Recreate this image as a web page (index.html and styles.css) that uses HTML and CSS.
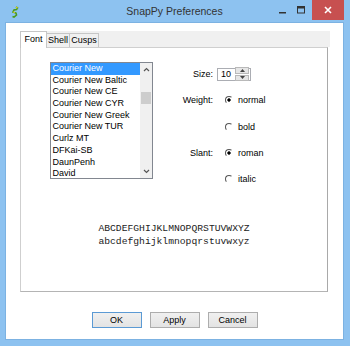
FILE: index.html
```html
<!DOCTYPE html>
<html lang="en">
<head>
  <meta charset="UTF-8">
  <title>SnapPy Preferences</title>
  <link rel="stylesheet" href="styles.css">
</head>
<body>
  <div class="window">
    <div class="titlebar">
      <div class="app-icon">
        <svg width="8" height="12" viewBox="0 0 8 12">
          <path d="M5 1 L6.5 2 L5.5 3.5 L3 4 L2 6 L5 7 L5.5 9 L3 11 L1.5 10.5" fill="none" stroke="#4a9a1c" stroke-width="1.6"/>
          <path d="M5 1 L6.5 2" stroke="#e8d020" stroke-width="1.2"/>
          <path d="M2 6 L4 6.5" stroke="#e8d020" stroke-width="1"/>
        </svg>
      </div>
      <div class="title">SnapPy Preferences</div>
      <div class="controls">
        <span class="ctl">
          <svg width="8" height="8" viewBox="0 0 8 8"><rect x="0" y="6" width="7" height="1.5" fill="#333"/></svg>
        </span>
        <span class="ctl">
          <svg width="9" height="8" viewBox="0 0 9 8"><rect x="0.5" y="0.5" width="7" height="6.5" fill="none" stroke="#333"/><rect x="0.5" y="0.5" width="7" height="2" fill="#333"/></svg>
        </span>
        <span class="ctl close">
          <svg width="8" height="8" viewBox="0 0 8 8"><path d="M1 1 L7 7 M7 1 L1 7" stroke="#fff" stroke-width="1.6"/></svg>
        </span>
      </div>
    </div>

    <div class="client">
      <div class="notebook">
        <div class="tabs">
          <div class="tab active">Font</div>
          <div class="tab shell">Shell</div>
          <div class="tab cusps">Cusps</div>
        </div>

        <div class="panel">
          <div class="top-row">
            <div class="listbox">
              <ul class="items">
                <li class="selected">Courier New</li>
                <li>Courier New Baltic</li>
                <li>Courier New CE</li>
                <li>Courier New CYR</li>
                <li>Courier New Greek</li>
                <li>Courier New TUR</li>
                <li>Curlz MT</li>
                <li>DFKai-SB</li>
                <li>DaunPenh</li>
                <li>David</li>
              </ul>
              <div class="scrollbar">
                <svg class="arrow" width="7" height="5" viewBox="0 0 7 5"><path d="M1 4 L3.5 1.5 L6 4" fill="none" stroke="#555" stroke-width="1.2"/></svg>
                <div class="track"><div class="thumb"></div></div>
                <svg class="arrow" width="7" height="5" viewBox="0 0 7 5"><path d="M1 1 L3.5 3.5 L6 1" fill="none" stroke="#555" stroke-width="1.2"/></svg>
              </div>
            </div>

            <div class="form">
              <label class="lbl">Size:</label>
              <div class="spin">
                <span class="spin-value">10</span>
                <span class="spin-btns">
                  <span class="spin-btn"><svg width="5" height="3" viewBox="0 0 5 3"><path d="M0 3 L2.5 0 L5 3Z" fill="#444"/></svg></span>
                  <span class="spin-btn"><svg width="5" height="3" viewBox="0 0 5 3"><path d="M0 0 L2.5 3 L5 0Z" fill="#444"/></svg></span>
                </span>
              </div>

              <label class="lbl">Weight:</label>
              <div class="radio checked">normal</div>
              <span></span>
              <div class="radio">bold</div>

              <label class="lbl">Slant:</label>
              <div class="radio checked">roman</div>
              <span></span>
              <div class="radio">italic</div>
            </div>
          </div>

          <div class="sample">
            ABCDEFGHIJKLMNOPQRSTUVWXYZ<br>
            abcdefghijklmnopqrstuvwxyz
          </div>
        </div>
      </div>

      <div class="buttons">
        <button class="btn default">OK</button>
        <button class="btn">Apply</button>
        <button class="btn">Cancel</button>
      </div>
    </div>
  </div>
</body>
</html>
```

FILE: styles.css
```css
html, body {
  margin: 0;
  padding: 0;
  background: #fff;
}
body {
  font-family: "Liberation Sans", Arial, sans-serif;
  font-size: 9px;
  color: #000;
}
.window {
  width: 350px;
  height: 346px;
  box-sizing: border-box;
  background: #8dc2f0;
  padding: 0 7px 7px 6px;
  display: flex;
  flex-direction: column;
}
.titlebar {
  height: 23px;
  flex: none;
  display: grid;
  grid-template-columns: 1fr auto 1fr;
}
.app-icon {
  padding: 6px 0 0 5px;
}
.title {
  font-size: 10.5px;
  color: #333;
  padding-top: 5px;
}
.controls {
  display: flex;
  justify-content: flex-end;
  align-items: flex-start;
  margin-right: -1px;
}
.ctl {
  width: 19px;
  height: 20px;
  display: flex;
  align-items: center;
  justify-content: center;
}
.close {
  width: 32px;
  background: #c75050;
  margin-left: 1px;
}
.client {
  flex: 1;
  background: #fff;
  display: flex;
  flex-direction: column;
  box-shadow: 0 0 0 1px #7cb2e2;
}
.notebook {
  margin: 8px 13px 0 14px;
  display: flex;
  flex-direction: column;
}
.tabs {
  height: 16px;
  background: #f0f0f0;
  display: flex;
  align-items: flex-end;
  position: relative;
  z-index: 1;
}
.tab {
  height: 14px;
  box-sizing: border-box;
  border: 1px solid #c6c6c6;
  border-bottom: none;
  background: #f0f0f0;
  padding: 0;
  margin-left: -1px;
  line-height: 13px;
  text-align: center;
  white-space: nowrap;
}
.tab.active {
  margin-left: 0;
  width: 27px;
  height: 17px;
  margin-bottom: -1px;
  background: #fff;
  line-height: 15px;
}
.tab.shell {
  width: 24px;
}
.tab.cusps {
  width: 30px;
}
.panel {
  height: 245px;
  box-sizing: border-box;
  margin-right: 2px;
  border: 1px solid #cfcfcf;
  border-right-color: #a9a9a9;
  border-bottom-color: #b4b4b4;
  background: #fff;
  padding: 14px 0 0 29px;
}
.top-row {
  display: flex;
  align-items: flex-start;
}
.listbox {
  width: 103px;
  height: 117px;
  box-sizing: border-box;
  border: 1px solid #828790;
  display: flex;
}
.items {
  list-style: none;
  margin: 0;
  padding: 0;
  flex: 1;
  overflow: hidden;
}
.items li {
  height: 11.7px;
  line-height: 11.7px;
  padding-left: 1.5px;
  white-space: nowrap;
}
.items li.selected {
  background: #3399ff;
  color: #fff;
}
.scrollbar {
  width: 12px;
  background: #f0f0f0;
  display: flex;
  flex-direction: column;
  align-items: center;
}
.scrollbar .arrow {
  margin: 4px 0;
}
.track {
  flex: 1;
  width: 100%;
}
.thumb {
  margin: 16px 0 0 1px;
  width: 10px;
  height: 12px;
  background: #cdcdcd;
}
.form {
  margin-top: -1px;
  display: grid;
  grid-template-columns: 60px auto;
  grid-auto-rows: 26.3px;
  column-gap: 4px;
  align-items: center;
}
.lbl {
  text-align: right;
}
.spin {
  width: 34px;
  height: 13px;
  box-sizing: border-box;
  border: 1px solid #abadb3;
  display: flex;
  align-items: center;
}
.spin-value {
  flex: 1;
  padding-left: 3px;
}
.spin-btns {
  display: flex;
  flex-direction: column;
  gap: 1px;
  margin-right: 1px;
}
.spin-btn {
  width: 12px;
  height: 4.5px;
  background: #e6e6e6;
  border: 0.5px solid #b9b9b9;
  display: flex;
  align-items: center;
  justify-content: center;
}
.radio {
  margin-left: 8px;
  display: flex;
  align-items: center;
  gap: 5px;
}
.radio::before {
  content: "";
  width: 6px;
  height: 6px;
  border-radius: 50%;
  border: 1px solid #fff;
  border-left-color: #555;
  border-top-color: #555;
  box-shadow: inset 0 0 0 1px #fff;
  background: #fff;
  flex: none;
}
.radio.checked::before {
  background: radial-gradient(circle, #000 0 1.5px, #fff 1.8px);
}
.sample {
  margin-top: 30px;
  margin-left: -29px;
  font-family: "Liberation Mono", "Courier New", monospace;
  font-size: 9.7px;
  line-height: 13px;
  text-align: center;
  color: #222;
}
.buttons {
  margin-top: 20px;
  display: flex;
  justify-content: center;
  gap: 8px;
}
.btn {
  width: 50px;
  height: 16px;
  box-sizing: border-box;
  border: 1px solid #adadad;
  background: linear-gradient(#f0f0f0, #e3e3e3);
  font-family: "Liberation Sans", Arial, sans-serif;
  font-size: 9px;
  color: #000;
  padding: 0;
}
.btn.default {
  border-color: #5b9ad4;
}
```
